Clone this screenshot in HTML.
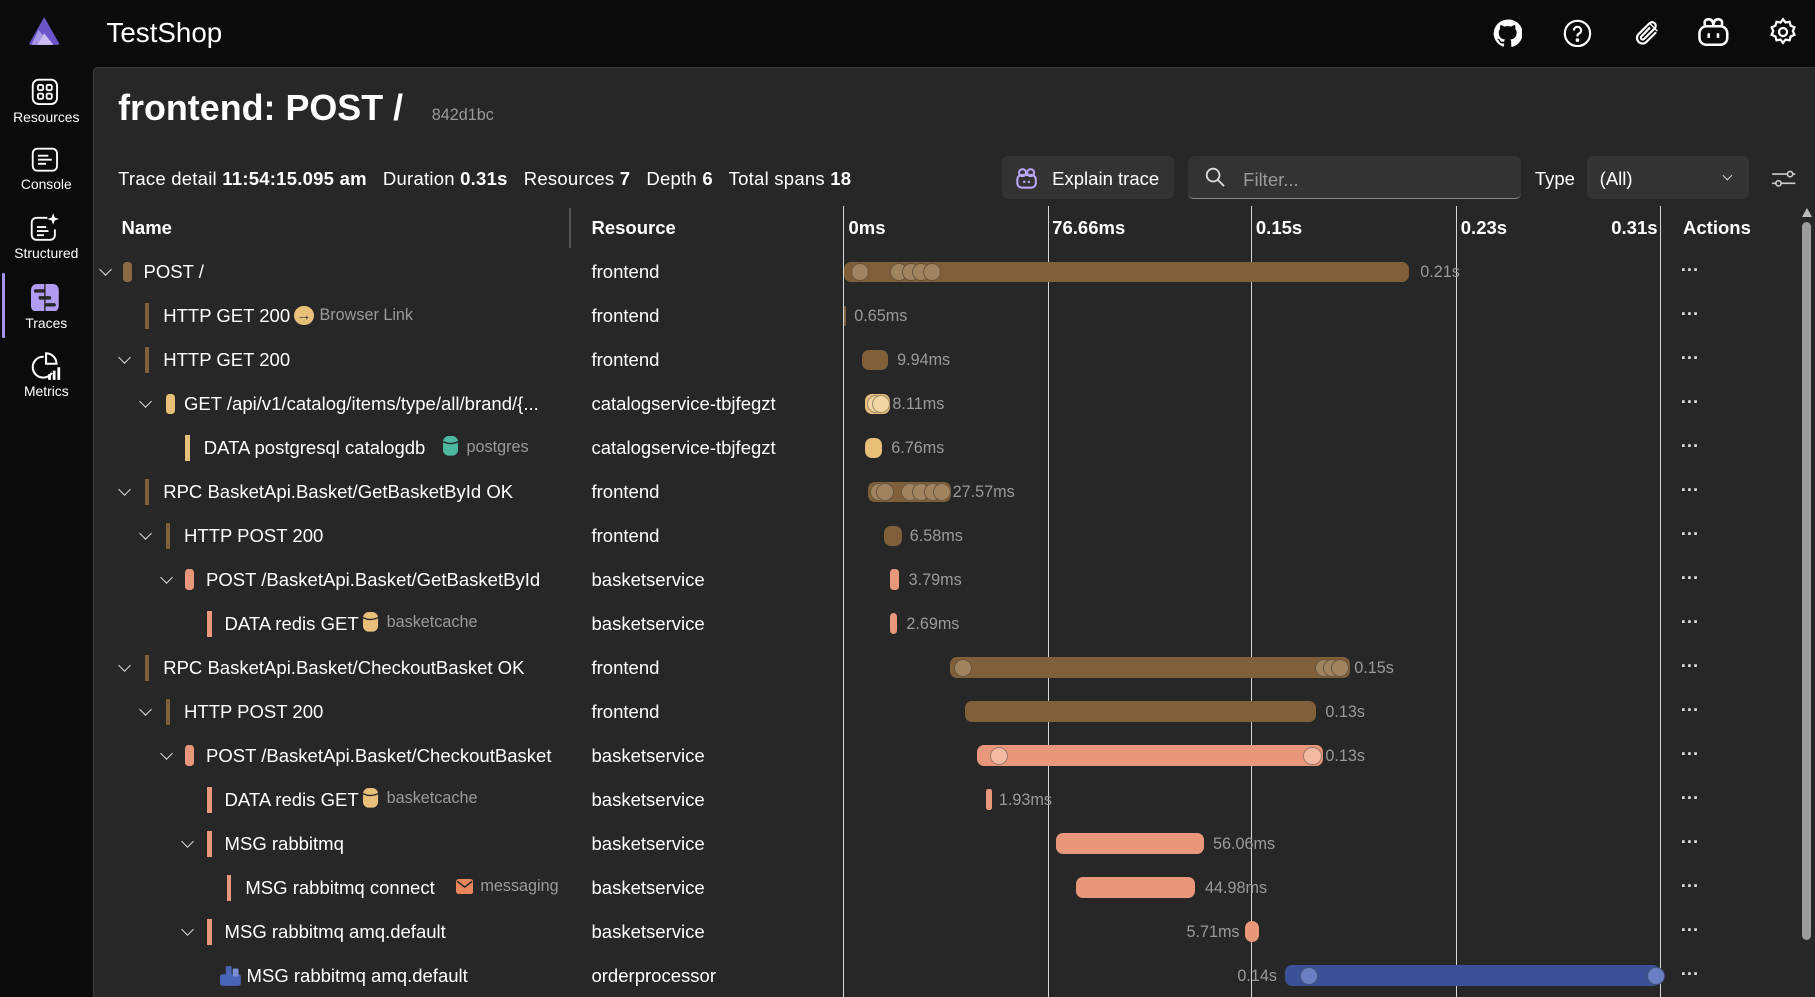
<!DOCTYPE html>
<html><head><meta charset="utf-8"><style>
html,body{margin:0;padding:0;background:#0b0b0b;overflow:hidden;width:1815px;height:997px}
#z{zoom:1.1575;position:relative;width:1568px;height:862px;font-family:"Liberation Sans",sans-serif;color:#fff}
.a{position:absolute;white-space:nowrap}
.nav{font-size:12px;text-align:center;width:80px;left:0}
#panel{position:absolute;left:80px;top:58px;width:1488px;height:810px;background:#272727;border-top:1px solid #3c3c3c;border-left:1px solid #3c3c3c;border-top-left-radius:4px}
.t{font-size:16px;line-height:20px}
.g{color:#9a9a9a;font-size:14px}
.vl{position:absolute;top:178px;width:1px;height:700px;background:#d8d8d8}
.bar{position:absolute;height:18px;border-radius:6px}
.c{position:absolute;width:14px;height:14px;border-radius:50%;border:1px solid rgba(0,0,0,.35)}
.ind{position:absolute;width:4px;height:22px}
.chev{position:absolute;width:7px;height:7px;border-right:1.5px solid #ddd;border-bottom:1.5px solid #ddd;transform:rotate(45deg)}
.dots{position:absolute;left:1452px;font-size:16px;color:#ddd;letter-spacing:0px;font-weight:bold}
.lbl{position:absolute;font-size:14px;color:#9a9a9a}
.ic{position:absolute;width:8px;height:18px;border-radius:3px}
</style></head><body><div id="z">
<svg class="a" style="left:24px;top:14px" width="28" height="26" viewBox="0 0 28 26"><path d="M14 1 L27 24 Q27 25 25 25 L3 25 Q1 25 1 24Z" fill="#6b55c8"/><path d="M9 12 L20 25 H3Z" fill="#a795e8"/><path d="M14 15 L22 25 H8Z" fill="#c9bdf4"/></svg>
<div class="a" style="left:92px;top:15px;font-size:24px">TestShop</div>
<svg class="a" style="left:1290px;top:16px" width="25" height="25" viewBox="0 0 24 24"><path fill="#fff" d="M12 .5a11.5 11.5 0 0 0-3.6 22.4c.6.1.8-.3.8-.6v-2c-3.2.7-3.900-1.5-3.9-1.5-.5-1.3-1.3-1.7-1.3-1.7-1-.7.1-.7.1-.7 1.2.1 1.8 1.2 1.8 1.2 1 1.8 2.8 1.3 3.4 1 .1-.8.4-1.3.8-1.600-2.600-.3-5.300-1.300-5.300-5.700 0-1.300.5-2.300 1.200-3.100-.1-.3-.5-1.500.1-3.100 0 0 1-.3 3.200 1.200a11 11 0 0 1 5.800 0c2.200-1.500 3.200-1.200 3.200-1.200.6 1.600.2 2.800.1 3.100.8.8 1.200 1.900 1.200 3.100 0 4.400-2.700 5.400-5.300 5.700.4.4.8 1.100.8 2.200v3.300c0 .3.2.7.8.6A11.5 11.5 0 0 0 12 .5z"/></svg>
<svg class="a" style="left:1350px;top:16px" width="25" height="25" viewBox="0 0 24 24" fill="none" stroke="#fff" stroke-width="1.8"><circle cx="12" cy="12" r="10.5"/><path d="M9 9.5a3 3 0 1 1 4 2.8c-.7.3-1 .8-1 1.5v.7"/><circle cx="12" cy="17.5" r=".6" fill="#fff"/></svg>
<svg class="a" style="left:1410px;top:16px" width="25" height="25" viewBox="0 0 24 24" fill="none" stroke="#fff" stroke-width="1.8"><path d="M20 11l-8 8a4.5 4.5 0 0 1-6.5-6.5l9-9a3 3 0 0 1 4.3 4.3l-8.8 8.8a1.5 1.5 0 0 1-2.2-2.2L15 7"/><path d="M14 3l7 7" stroke-width="1.2"/></svg>
<svg class="a" style="left:1465px;top:15px" width="30" height="26" viewBox="0 0 30 26" fill="none" stroke="#fff" stroke-width="2.2"><rect x="3" y="8" width="24" height="16" rx="6"/><path d="M8 8 Q6 2 11 2 Q15 2 15 8 Q15 2 19 2 Q24 2 22 8"/><path d="M11 14v4M19 14v4"/></svg>
<svg class="a" style="left:1527px;top:15px" width="26" height="26" viewBox="0 0 24 24" fill="none" stroke="#fff" stroke-width="1.8"><circle cx="12" cy="12" r="3.2"/><path d="M12 1.8l2 2.6 3.2-.6.9 3.1 3 1.3-1.3 3 1.3 3-3 1.3-.9 3.1-3.2-.6-2 2.6-2-2.6-3.2.6-.9-3.1-3-1.3 1.3-3-1.3-3 3-1.3.9-3.1 3.2.6z"/></svg>
<svg class="a" style="left:27px;top:67px" width="24" height="24" viewBox="0 0 24 24" fill="none" stroke="#fff" stroke-width="1.6"><rect x="1.5" y="1.5" width="21" height="21" rx="5"/><rect x="6" y="6" width="4.5" height="4.5" rx="1.2"/><rect x="13.5" y="6" width="4.5" height="4.5" rx="1.2"/><rect x="6" y="13.5" width="4.5" height="4.5" rx="1.2"/><rect x="13.5" y="13.5" width="4.5" height="4.5" rx="1.2"/></svg>
<div class="a nav" style="top:94px">Resources</div>
<svg class="a" style="left:27px;top:127px" width="24" height="22" viewBox="0 0 24 22" fill="none" stroke="#fff" stroke-width="1.6"><rect x="1.5" y="1.5" width="21" height="19" rx="4"/><path d="M6 7.5h9M6 11h12M6 14.5h7"/></svg>
<div class="a nav" style="top:152px">Console</div>
<svg class="a" style="left:26px;top:183px" width="27" height="26" viewBox="0 0 27 26" fill="none" stroke="#fff" stroke-width="1.6"><path d="M15 5H5.5a4 4 0 0 0-4 4v11a4 4 0 0 0 4 4h12a4 4 0 0 0 4-4v-5"/><path d="M6 13h8M6 16.5h10M6 20h6"/><path d="M20 1l1.3 3.7L25 6l-3.7 1.3L20 11l-1.3-3.7L15 6l3.7-1.3z" fill="#fff" stroke="none"/></svg>
<div class="a nav" style="top:212px">Structured</div>
<div class="a" style="left:2px;top:236px;width:2px;height:56px;background:#a794f0;border-radius:1px"></div>
<svg class="a" style="left:27px;top:245px" width="24" height="24" viewBox="0 0 24 24"><rect x="0" y="0" width="24" height="24" rx="5" fill="#b19cf2"/><path d="M4 6h7M8 12h8M13 18h7" stroke="#272727" stroke-width="3" stroke-linecap="round"/><path d="M12 0v24" stroke="#272727" stroke-width="1.2"/></svg>
<div class="a nav" style="top:272px">Traces</div>
<svg class="a" style="left:27px;top:303px" width="26" height="26" viewBox="0 0 26 26" fill="none" stroke="#fff" stroke-width="1.8"><path d="M11 5a9 9 0 1 0 7 14"/><path d="M13 2v9h9a9 9 0 0 0-9-9z"/><path d="M16 25v-5M20 25v-8M24 25v-11" stroke-width="2.4"/></svg>
<div class="a nav" style="top:331px">Metrics</div>

<div id="panel"></div>
<div class="a" style="left:102px;top:76px;font-size:31px;font-weight:bold">frontend: POST /</div>
<div class="a g" style="left:373px;top:92px;font-size:14px">842d1bc</div>
<div class="a t" style="left:102px;top:144px;letter-spacing:0.2px">Trace detail <b>11:54:15.095 am</b> &nbsp; Duration <b>0.31s</b> &nbsp; Resources <b>7</b> &nbsp; Depth <b>6</b> &nbsp; Total spans <b>18</b></div>
<div class="a" style="left:866px;top:135px;width:148px;height:37px;background:#333;border-radius:5px"></div>
<svg class="a" style="left:877px;top:145px" width="20" height="18" viewBox="0 0 20 18" fill="none" stroke="#b9a6f5" stroke-width="1.8"><rect x="2" y="6" width="16" height="11" rx="4"/><circle cx="6.5" cy="4" r="3"/><circle cx="13.5" cy="4" r="3"/><path d="M8 11v2M12 11v2"/></svg>
<div class="a t" style="left:909px;top:144px">Explain trace</div>
<div class="a" style="left:1026px;top:135px;width:288px;height:36px;background:#333;border-radius:5px;border-bottom:1px solid #888"></div>
<svg class="a" style="left:1041px;top:144px" width="18" height="18" viewBox="0 0 18 18" fill="none" stroke="#ddd" stroke-width="1.6"><circle cx="7" cy="7" r="5.5"/><path d="M11 11l5.5 5.5"/></svg>
<div class="a t" style="left:1074px;top:145px;color:#9a9a9a">Filter...</div>
<div class="a t" style="left:1326px;top:144px">Type</div>
<div class="a" style="left:1371px;top:135px;width:140px;height:37px;background:#333;border-radius:5px"></div>
<div class="a t" style="left:1382px;top:144px">(All)</div>
<div class="chev" style="left:1489px;top:149px;width:5px;height:5px"></div>
<svg class="a" style="left:1530px;top:143px" width="22" height="22" viewBox="0 0 22 22" fill="none" stroke="#ccc" stroke-width="1.4"><path d="M1 7h13M19 7h2M1 15h3M9 15h12"/><circle cx="16.5" cy="7" r="2.3"/><circle cx="6.5" cy="15" r="2.3"/></svg>

<div class="a t" style="left:105px;top:187px;font-weight:bold">Name</div>
<div class="a" style="left:492px;top:180px;width:1px;height:34px;background:#555"></div>
<div class="a t" style="left:511px;top:187px;font-weight:bold">Resource</div>
<div class="vl" style="left:728px"></div><div class="vl" style="left:905px"></div><div class="vl" style="left:1081px"></div><div class="vl" style="left:1258px"></div><div class="vl" style="left:1434px"></div>
<div class="a t" style="left:733px;top:187px;font-weight:bold">0ms</div>
<div class="a t" style="left:909px;top:187px;font-weight:bold">76.66ms</div>
<div class="a t" style="left:1085px;top:187px;font-weight:bold">0.15s</div>
<div class="a t" style="left:1262px;top:187px;font-weight:bold">0.23s</div>
<div class="a t" style="left:1392px;top:187px;font-weight:bold">0.31s</div>
<div class="a t" style="left:1454px;top:187px;font-weight:bold">Actions</div>
<div class="a" style="left:1556px;top:180px;width:10px;height:680px"><div style="margin:0 auto;width:0;height:0;border-left:5px solid transparent;border-right:5px solid transparent;border-bottom:8px solid #bbb"></div><div style="margin:4px auto;width:8px;height:620px;background:#9c9c9c;border-radius:4px"></div></div>

<div class="chev" style="left:87px;top:229px"></div><div class="ic" style="left:106px;top:226px;background:#8a6a44"></div><div class="a t" style="left:124px;top:225px">POST /</div><div class="a t" style="left:511px;top:225px">frontend</div>
<div class="bar" style="left:729px;top:226px;width:488px;background:#80603b"></div>
<div class="c" style="left:735px;top:227px;background:#a0845f"></div><div class="c" style="left:769px;top:227px;background:#a0845f"></div><div class="c" style="left:779px;top:227px;background:#a0845f"></div><div class="c" style="left:788px;top:227px;background:#a0845f"></div><div class="c" style="left:797px;top:227px;background:#a0845f"></div>
<div class="lbl" style="left:1227px;top:227px">0.21s</div><div class="dots" style="top:224px">···</div>

<div class="ind" style="left:125px;top:262px;background:#80603b"></div><div class="a t" style="left:141px;top:263px">HTTP GET 200</div>
<div class="a" style="left:254px;top:264px;width:17px;height:17px;border-radius:50%;background:#e8c07a;color:#333;font-size:13px;text-align:center;line-height:17px;font-weight:bold">→</div>
<div class="a g" style="left:276px;top:264px">Browser Link</div><div class="a t" style="left:511px;top:263px">frontend</div>
<div class="bar" style="left:729px;top:264px;width:2px;background:#80603b"></div><div class="lbl" style="left:738px;top:265px">0.65ms</div><div class="dots" style="top:262px">···</div>

<div class="chev" style="left:104px;top:305px"></div><div class="ind" style="left:125px;top:300px;background:#80603b"></div><div class="a t" style="left:141px;top:301px">HTTP GET 200</div><div class="a t" style="left:511px;top:301px">frontend</div>
<div class="bar" style="left:745px;top:302px;width:22px;background:#80603b"></div><div class="lbl" style="left:775px;top:303px">9.94ms</div><div class="dots" style="top:300px">···</div>

<div class="chev" style="left:122px;top:343px"></div><div class="ic" style="left:143px;top:340px;background:#e8c07a"></div><div class="a t" style="left:159px;top:339px">GET /api/v1/catalog/items/type/all/brand/{...</div><div class="a t" style="left:511px;top:339px">catalogservice-tbjfegzt</div>
<div class="bar" style="left:747px;top:340px;width:22px;background:#e8c07a"></div><div class="c" style="left:749px;top:341px;background:#f2d6a4"></div><div class="c" style="left:753px;top:341px;background:#f2d6a4"></div><div class="lbl" style="left:771px;top:341px">8.11ms</div><div class="dots" style="top:338px">···</div>

<div class="ind" style="left:160px;top:376px;background:#e8c07a"></div><div class="a t" style="left:176px;top:377px">DATA postgresql catalogdb</div>
<svg class="a" style="left:383px;top:377px" width="13" height="17" viewBox="0 0 13 17"><rect x="0" y="0" width="13" height="17" rx="5" fill="#4db8a0"/><path d="M0 5q6.5 3 13 0" stroke="#272727" stroke-width="1.2" fill="none"/></svg>
<div class="a g" style="left:403px;top:378px">postgres</div><div class="a t" style="left:511px;top:377px">catalogservice-tbjfegzt</div>
<div class="bar" style="left:747px;top:378px;width:15px;background:#e8c07a"></div><div class="lbl" style="left:770px;top:379px">6.76ms</div><div class="dots" style="top:376px">···</div>

<div class="chev" style="left:104px;top:419px"></div><div class="ind" style="left:125px;top:414px;background:#80603b"></div><div class="a t" style="left:141px;top:415px">RPC BasketApi.Basket/GetBasketById OK</div><div class="a t" style="left:511px;top:415px">frontend</div>
<div class="bar" style="left:750px;top:416px;width:72px;background:#80603b"></div><div class="c" style="left:752px;top:417px;background:#a0845f"></div><div class="c" style="left:757px;top:417px;background:#a0845f"></div><div class="c" style="left:778px;top:417px;background:#a0845f"></div><div class="c" style="left:788px;top:417px;background:#a0845f"></div><div class="c" style="left:798px;top:417px;background:#a0845f"></div><div class="c" style="left:806px;top:417px;background:#a0845f"></div><div class="lbl" style="left:823px;top:417px">27.57ms</div><div class="dots" style="top:414px">···</div>

<div class="chev" style="left:122px;top:457px"></div><div class="ind" style="left:143px;top:452px;background:#80603b"></div><div class="a t" style="left:159px;top:453px">HTTP POST 200</div><div class="a t" style="left:511px;top:453px">frontend</div>
<div class="bar" style="left:764px;top:454px;width:15px;background:#80603b"></div><div class="lbl" style="left:786px;top:455px">6.58ms</div><div class="dots" style="top:452px">···</div>

<div class="chev" style="left:140px;top:495px"></div><div class="ic" style="left:160px;top:492px;background:#e8977a"></div><div class="a t" style="left:178px;top:491px">POST /BasketApi.Basket/GetBasketById</div><div class="a t" style="left:511px;top:491px">basketservice</div>
<div class="bar" style="left:769px;top:492px;width:8px;background:#e8977a;border-radius:3px"></div><div class="lbl" style="left:785px;top:493px">3.79ms</div><div class="dots" style="top:490px">···</div>

<div class="ind" style="left:179px;top:528px;background:#e8977a"></div><div class="a t" style="left:194px;top:529px">DATA redis GET</div>
<svg class="a" style="left:314px;top:529px" width="13" height="17" viewBox="0 0 13 17"><rect x="0" y="0" width="13" height="17" rx="5" fill="#e8c07a"/><path d="M0 5q6.5 3 13 0" stroke="#272727" stroke-width="1.2" fill="none"/></svg>
<div class="a g" style="left:334px;top:530px">basketcache</div><div class="a t" style="left:511px;top:529px">basketservice</div>
<div class="bar" style="left:769px;top:530px;width:6px;background:#e8977a;border-radius:3px"></div><div class="lbl" style="left:783px;top:531px">2.69ms</div><div class="dots" style="top:528px">···</div>

<div class="chev" style="left:104px;top:571px"></div><div class="ind" style="left:125px;top:566px;background:#80603b"></div><div class="a t" style="left:141px;top:567px">RPC BasketApi.Basket/CheckoutBasket OK</div><div class="a t" style="left:511px;top:567px">frontend</div>
<div class="bar" style="left:821px;top:568px;width:345px;background:#80603b"></div><div class="c" style="left:824px;top:569px;background:#a0845f"></div><div class="c" style="left:1136px;top:569px;background:#a0845f"></div><div class="c" style="left:1143px;top:569px;background:#a0845f"></div><div class="c" style="left:1150px;top:569px;background:#a0845f"></div><div class="lbl" style="left:1170px;top:569px">0.15s</div><div class="dots" style="top:566px">···</div>

<div class="chev" style="left:122px;top:609px"></div><div class="ind" style="left:143px;top:604px;background:#80603b"></div><div class="a t" style="left:159px;top:605px">HTTP POST 200</div><div class="a t" style="left:511px;top:605px">frontend</div>
<div class="bar" style="left:834px;top:606px;width:303px;background:#80603b"></div><div class="lbl" style="left:1145px;top:607px">0.13s</div><div class="dots" style="top:604px">···</div>

<div class="chev" style="left:140px;top:647px"></div><div class="ic" style="left:160px;top:644px;background:#e8977a"></div><div class="a t" style="left:178px;top:643px">POST /BasketApi.Basket/CheckoutBasket</div><div class="a t" style="left:511px;top:643px">basketservice</div>
<div class="bar" style="left:844px;top:644px;width:299px;background:#e8977a"></div><div class="c" style="left:855px;top:645px;background:#f4b9a2"></div><div class="c" style="left:1126px;top:645px;background:#f4b9a2"></div><div class="lbl" style="left:1145px;top:645px">0.13s</div><div class="dots" style="top:642px">···</div>

<div class="ind" style="left:179px;top:680px;background:#e8977a"></div><div class="a t" style="left:194px;top:681px">DATA redis GET</div>
<svg class="a" style="left:314px;top:681px" width="13" height="17" viewBox="0 0 13 17"><rect x="0" y="0" width="13" height="17" rx="5" fill="#e8c07a"/><path d="M0 5q6.5 3 13 0" stroke="#272727" stroke-width="1.2" fill="none"/></svg>
<div class="a g" style="left:334px;top:682px">basketcache</div><div class="a t" style="left:511px;top:681px">basketservice</div>
<div class="bar" style="left:852px;top:682px;width:5px;background:#e8977a;border-radius:2px"></div><div class="lbl" style="left:863px;top:683px">1.93ms</div><div class="dots" style="top:680px">···</div>

<div class="chev" style="left:158px;top:723px"></div><div class="ind" style="left:179px;top:718px;background:#e8977a"></div><div class="a t" style="left:194px;top:719px">MSG rabbitmq</div><div class="a t" style="left:511px;top:719px">basketservice</div>
<div class="bar" style="left:912px;top:720px;width:128px;background:#e8977a"></div><div class="lbl" style="left:1048px;top:721px">56.06ms</div><div class="dots" style="top:718px">···</div>

<div class="ind" style="left:196px;top:756px;background:#e8977a"></div><div class="a t" style="left:212px;top:757px">MSG rabbitmq connect</div>
<svg class="a" style="left:394px;top:759px" width="15" height="13" viewBox="0 0 15 13"><rect width="15" height="13" rx="2.5" fill="#e8855a"/><path d="M1 2l6.5 5 6.5-5" stroke="#272727" stroke-width="1.3" fill="none"/></svg>
<div class="a g" style="left:415px;top:758px">messaging</div><div class="a t" style="left:511px;top:757px">basketservice</div>
<div class="bar" style="left:930px;top:758px;width:102px;background:#e8977a"></div><div class="lbl" style="left:1041px;top:759px">44.98ms</div><div class="dots" style="top:756px">···</div>

<div class="chev" style="left:158px;top:799px"></div><div class="ind" style="left:179px;top:794px;background:#e8977a"></div><div class="a t" style="left:194px;top:795px">MSG rabbitmq amq.default</div><div class="a t" style="left:511px;top:795px">basketservice</div>
<div class="bar" style="left:1076px;top:796px;width:12px;background:#e8977a"></div><div class="lbl" style="left:1025px;top:797px">5.71ms</div><div class="dots" style="top:794px">···</div>

<svg class="a" style="left:190px;top:834px" width="18" height="18" viewBox="0 0 18 18"><rect x="0" y="8" width="18" height="10" rx="2" fill="#4a64b8"/><rect x="5" y="1" width="5" height="9" rx="1" fill="#4a64b8"/><rect x="11" y="3" width="5" height="7" rx="1" fill="#7b8fd4"/></svg>
<div class="a t" style="left:213px;top:833px">MSG rabbitmq amq.default</div><div class="a t" style="left:511px;top:833px">orderprocessor</div>
<div class="bar" style="left:1110px;top:834px;width:324px;background:#3b5196"></div><div class="c" style="left:1123px;top:835px;background:#6a80c2"></div><div class="c" style="left:1423px;top:835px;background:#6a80c2"></div><div class="lbl" style="left:1069px;top:835px">0.14s</div><div class="dots" style="top:832px">···</div>
</div></body></html>
